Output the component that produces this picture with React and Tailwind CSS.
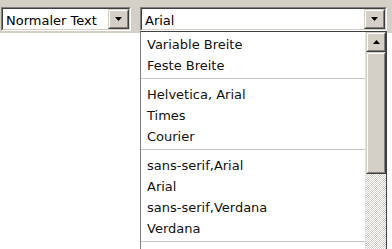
import React from "react";

const font = { fontFamily: '"DejaVu Sans", Verdana, sans-serif' };

function Arrow({ up }) {
  return (
    <svg width="7" height="4" viewBox="0 0 7 4" className="block">
      {up ? <path d="M3.5 0 L7 4 L0 4 Z" fill="#000" /> : <path d="M0 0 L7 0 L3.5 4 Z" fill="#000" />}
    </svg>
  );
}

function RaisedButton({ children, className = "" }) {
  return (
    <div className={"border border-t-[#d4d0c8] border-l-[#d4d0c8] border-r-[#404040] border-b-[#404040] " + className}>
      <div className="w-full h-full border border-t-white border-l-white border-r-[#808080] border-b-[#808080] bg-[#d4d0c8] flex items-center justify-center">
        {children}
      </div>
    </div>
  );
}

function SelectBox({ label, width }) {
  return (
    <div className={"h-[24px] border border-t-[#808080] border-l-[#808080] border-r-white border-b-white " + width}>
      <div className="h-full border border-t-[#404040] border-l-[#404040] border-r-[#d4d0c8] border-b-[#d4d0c8] bg-white flex items-center">
        <span className="flex-1 pl-[3px] pt-[2px] text-[13px] leading-none text-black whitespace-nowrap" style={font}>{label}</span>
        <RaisedButton className="w-[21px] h-[20px]"><Arrow /></RaisedButton>
      </div>
    </div>
  );
}

const Item = ({ t }) => (
  <div className="h-[21px] flex items-center pl-[6px] pt-[1px] text-[13px] leading-none text-[#111] whitespace-nowrap" style={font}>{t}</div>
);
const Sep = () => (
  <div className="h-[8px] pt-[3px]"><div className="h-px bg-[#c8c8c8]" /></div>
);

export default function App() {
  return (
    <div className="relative w-[392px] h-[249px] overflow-hidden bg-white">
      <div className="h-[33px] bg-[#d4d0c8] flex items-start pt-[7px] pl-[1px] gap-[9px]">
        <SelectBox label="Normaler Text" width="w-[130px]" />
        <SelectBox label="Arial" width="w-[247px]" />
      </div>
      <div className="absolute left-[140px] top-[31px] w-[247px] h-[240px] bg-white border-t border-t-[#404040] border-l border-l-[#808080] border-r border-r-[#404040] flex">
        <div className="flex-1 pt-[1px] border-r border-r-[#e0e0e0]">
          <Item t="Variable Breite" />
          <Item t="Feste Breite" />
          <Sep />
          <Item t="Helvetica, Arial" />
          <Item t="Times" />
          <Item t="Courier" />
          <Sep />
          <Item t="sans-serif,Arial" />
          <Item t="Arial" />
          <Item t="sans-serif,Verdana" />
          <Item t="Verdana" />
          <Sep />
        </div>
        <div className="w-[20px] flex flex-col">
          <RaisedButton className="w-[20px] h-[20px]"><Arrow up /></RaisedButton>
          <RaisedButton className="w-[20px] h-[122px]" />
          <div className="flex-1 bg-[repeating-conic-gradient(#d4d0c8_0_25%,#ffffff_0_50%)] bg-[length:2px_2px]" />
        </div>
      </div>
    </div>
  );
}
